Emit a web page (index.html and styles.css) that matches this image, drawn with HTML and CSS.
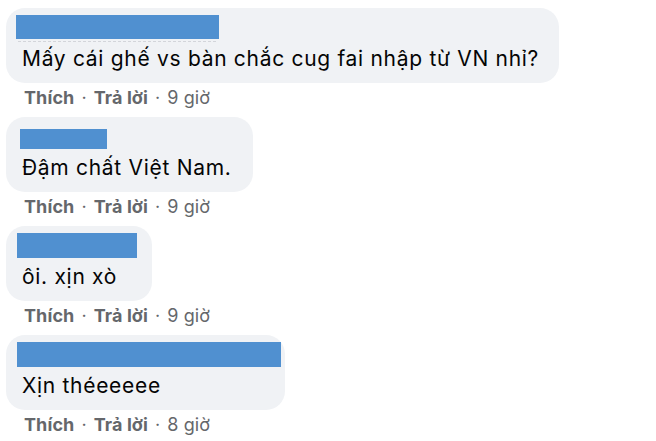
FILE: index.html
```html
<!DOCTYPE html>
<html lang="vi">
<head>
<meta charset="utf-8">
<link rel="stylesheet" href="styles.css">
</head>
<body>
<div class="list">
  <div class="comment">
    <div class="bubble b1">
      <div class="name"><span class="bar bar1" style="width:203px"></span><span class="ghost" style="width:198px"></span></div>
      <div class="text">Mấy cái ghế vs bàn chắc cug fai nhập từ VN nhỉ?</div>
    </div>
    <div class="actions"><b>Thích</b><span class="dot">·</span><b>Trả lời</b><span class="dot">·</span><span>9 giờ</span></div>
  </div>
  <div class="comment">
    <div class="bubble b2">
      <div class="name"><span class="bar bar2" style="width:87px"></span></div>
      <div class="text">Đậm chất Việt Nam.</div>
    </div>
    <div class="actions"><b>Thích</b><span class="dot">·</span><b>Trả lời</b><span class="dot">·</span><span>9 giờ</span></div>
  </div>
  <div class="comment">
    <div class="bubble b3">
      <div class="name"><span class="bar bar3" style="width:120px"></span></div>
      <div class="text">ôi. xịn xò</div>
    </div>
    <div class="actions"><b>Thích</b><span class="dot">·</span><b>Trả lời</b><span class="dot">·</span><span>9 giờ</span></div>
  </div>
  <div class="comment">
    <div class="bubble b4">
      <div class="name"><span class="bar bar4" style="width:264px"></span></div>
      <div class="text">Xịn théeeeee</div>
    </div>
    <div class="actions"><b>Thích</b><span class="dot">·</span><b>Trả lời</b><span class="dot">·</span><span>8 giờ</span></div>
  </div>
</div>
</body>
</html>
```
FILE: styles.css
```css
html, body {
  margin: 0;
  padding: 0;
  background: #ffffff;
}
body {
  font-family: Inter, "Liberation Sans", Arial, sans-serif;
  color: #050505;
}
.list {
  padding: 8px 0 0 6px;
  display: flex;
  flex-direction: column;
  gap: 4px;
}
.comment {
  display: flex;
  flex-direction: column;
  align-items: flex-start;
}
.bubble {
  box-sizing: border-box;
  height: 75px;
  background: #f0f2f5;
  border-radius: 19px;
  padding: 7px 0 0 16px;
}
.b1 { width: 553px; }
.b2 { width: 247px; }
.b3 { width: 146px; }
.b4 { width: 279px; }
.name {
  height: 25px;
  display: flex;
  flex-direction: column;
  align-items: flex-start;
}
.bar {
  display: block;
  flex: none;
  height: 25px;
  background: #5090d0;
  margin-left: -5px;
}
.bar1 { height: 24px; margin-left: -6px; }
.bar2 { height: 20px; margin-top: 5px; margin-left: -2px; }
.bar3 { margin-left: -5px; }
.bar4 { margin-left: -5px; }
.ghost {
  display: block;
  flex: none;
  height: 0;
  margin-top: 2px;
  margin-left: -4px;
  border-top: 1px dashed #d3d5da;
}
.text {
  font-size: 21px;
  letter-spacing: 0.7px;
  line-height: 38px;
  white-space: nowrap;
}
.actions {
  height: 30px;
  line-height: 30px;
  padding-left: 18px;
  font-size: 18px;
  letter-spacing: 0.1px;
  color: #65676b;
  white-space: nowrap;
}
.actions b { font-weight: 700; }
.dot { padding: 0 7px; }
```
